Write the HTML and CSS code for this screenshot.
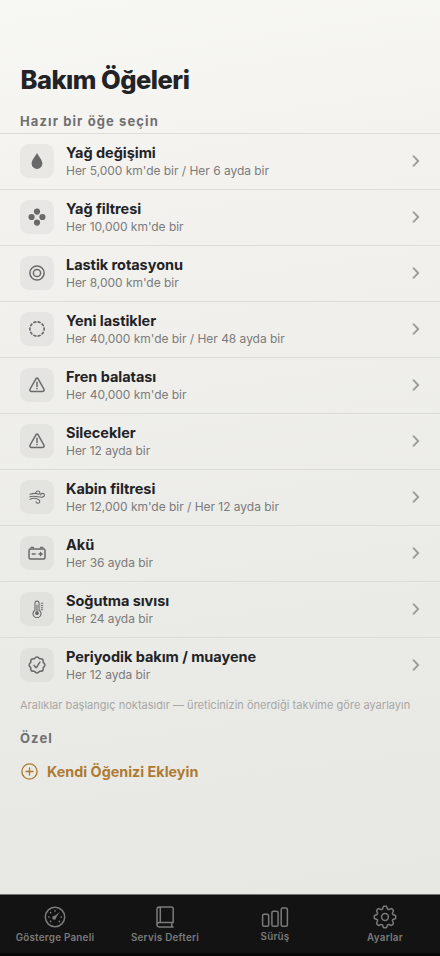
FILE: index.html
```html
<!DOCTYPE html>
<html lang="tr">
<head>
<meta charset="utf-8">
<meta name="viewport" content="width=device-width, initial-scale=1">
<title>Bakım Öğeleri</title>
<link rel="stylesheet" href="styles.css">
</head>
<body>
<svg class="defs" aria-hidden="true">
  <symbol id="chevron" viewBox="0 0 8 12"><path d="M1.5 1.2 6.2 6 1.5 10.8"/></symbol>
  <symbol id="warning" viewBox="-9 -9 18 18"><path d="M-1.1-6.2Q0-7.6 1.1-6.2L6.9 4Q7.7 6.2 5.6 6.4H-5.6Q-7.7 6.2-6.9 4Z"/><path d="M0-2.8V1.4M0 3.5V3.7"/></symbol>
</svg>
<main class="screen">
  <h1 class="title">Bakım Öğeleri</h1>
  <h2 class="section">Hazır bir öğe seçin</h2>
  <ul class="list">
    <li class="row"><span class="tile"><svg viewBox="-9 -9 18 18"><path class="solid" d="M0-8C1.1-5.3 5.4-1.2 5.4 2.6A5.4 5.3 0 0 1-5.4 2.6C-5.4-1.2-1.1-5.3 0-8Z"/></svg></span><div class="copy"><b class="name">Yağ değişimi</b><span class="detail">Her 5,000 km'de bir / Her 6 ayda bir</span></div><svg class="chevron"><use href="#chevron"/></svg></li>
    <li class="row"><span class="tile"><svg viewBox="-9 -9 18 18"><g class="solid"><circle cy="-5.4" r="3.1"/><circle cy="5.6" r="3.1"/><circle cx="-5.4" r="3.1"/><circle cx="5.4" r="3.1"/></g></svg></span><div class="copy"><b class="name">Yağ filtresi</b><span class="detail">Her 10,000 km'de bir</span></div><svg class="chevron"><use href="#chevron"/></svg></li>
    <li class="row"><span class="tile"><svg viewBox="-9 -9 18 18"><circle r="7.1"/><circle r="3.6"/></svg></span><div class="copy"><b class="name">Lastik rotasyonu</b><span class="detail">Her 8,000 km'de bir</span></div><svg class="chevron"><use href="#chevron"/></svg></li>
    <li class="row"><span class="tile"><svg viewBox="-9 -9 18 18"><circle class="dashed" r="7.1" pathLength="120"/></svg></span><div class="copy"><b class="name">Yeni lastikler</b><span class="detail">Her 40,000 km'de bir / Her 48 ayda bir</span></div><svg class="chevron"><use href="#chevron"/></svg></li>
    <li class="row"><span class="tile"><svg><use href="#warning"/></svg></span><div class="copy"><b class="name">Fren balatası</b><span class="detail">Her 40,000 km'de bir</span></div><svg class="chevron"><use href="#chevron"/></svg></li>
    <li class="row"><span class="tile"><svg><use href="#warning"/></svg></span><div class="copy"><b class="name">Silecekler</b><span class="detail">Her 12 ayda bir</span></div><svg class="chevron"><use href="#chevron"/></svg></li>
    <li class="row"><span class="tile"><svg class="fine" viewBox="-9 -9 18 18"><path d="M-7-2.7Q-2-4.4 1-2.9C4-2.2 3.1-6 .9-6Q-.8-6-1-4.5M-7.2-.2C-2-2 2 .9 5.4.1C8.4-.6 7.7-3.7 5.5-3.6Q3.8-3.6 3.7-2M-7 2.2C-3.5.6-.2 1.5 1.4 2.6C3.8 4 2.7 6.3.9 6.2Q-.8 6.2-1.1 4.7"/></svg></span><div class="copy"><b class="name">Kabin filtresi</b><span class="detail">Her 12,000 km'de bir / Her 12 ayda bir</span></div><svg class="chevron"><use href="#chevron"/></svg></li>
    <li class="row"><span class="tile"><svg viewBox="-9 -9 18 18"><rect x="-8" y="-4.1" width="16" height="10.1" rx="1.5"/><path d="M-5.8-5.5H-3.6M3.6-5.5H5.8M-4.7 1H-1.9M2 1H5.2M3.6-.6V2.6"/></svg></span><div class="copy"><b class="name">Akü</b><span class="detail">Her 36 ayda bir</span></div><svg class="chevron"><use href="#chevron"/></svg></li>
    <li class="row"><span class="tile"><svg class="fine" viewBox="-9 -9 18 18"><path d="M-2-6Q-1.9-7.9 0-7.9T2-6V1.2A4 4 0 1 1-2 1.2Z"/><path d="M0-4V3M4.2-5.7H5.7M4.2-3.5H5.7M4.2-1.3H5.7M4.2.7H5.7"/><circle class="solid" cy="4.2" r="1.9"/></svg></span><div class="copy"><b class="name">Soğutma sıvısı</b><span class="detail">Her 24 ayda bir</span></div><svg class="chevron"><use href="#chevron"/></svg></li>
    <li class="row"><span class="tile"><svg viewBox="-9 -9 18 18"><path d="M-2.6-6.2Q0-9.6 2.6-6.2Q6.8-6.8 6.2-2.6Q9.6 0 6.2 2.6Q6.8 6.8 2.6 6.2Q0 9.6-2.6 6.2Q-6.8 6.8-6.2 2.6Q-9.6 0-6.2-2.6Q-6.8-6.8-2.6-6.2ZM-2.9.4-.8 2.8 2.9-2.8"/></svg></span><div class="copy"><b class="name">Periyodik bakım / muayene</b><span class="detail">Her 12 ayda bir</span></div><svg class="chevron"><use href="#chevron"/></svg></li>
  </ul>
  <p class="note">Aralıklar başlangıç noktasıdır — üreticinizin önerdiği takvime göre ayarlayın</p>
  <h2 class="section custom">Özel</h2>
  <div class="add"><svg viewBox="-9 -9 18 18"><circle r="7.2"/><path d="M-3.3 0H3.3M0-3.3V3.3"/></svg><span>Kendi Öğenizi Ekleyin</span></div>
</main>
<nav class="tabs">
  <div class="tab"><svg viewBox="-12 -12 24 24"><circle r="9.7"/><circle class="solid" cx="-.8" cy=".8" r="2"/><path class="solid" d="M-2.1-.1 5-5-.1 2.1Z"/><path class="dots" d="M0-6.2V-6.2M-4.4-4.4V-4.4M-6.2 0V0M6.2 0V0M-4.4 4.4V4.4M4.4 4.4V4.4"/></svg><span>Gösterge Paneli</span></div>
  <div class="tab"><svg viewBox="-12 -12 24 24"><path d="M8.1 5.4H-5.8Q-8 5.6-8 7.8V-7.4Q-8-10-5.4-10H6.2Q8.2-10 8.2-8V5.4M-4.7-10V5.4M-8 7.8Q-7.8 10.1-5.6 10.1H8.1M6.8 5.5V10"/></svg><span>Servis Defteri</span></div>
  <div class="tab drive"><svg class="wide" viewBox="-14 -12 28 24"><rect x="-12.4" y="-2.7" width="6.1" height="12" rx="1.6"/><rect x="-3.1" y="-5.8" width="6.2" height="15.1" rx="1.6"/><rect x="6.2" y="-8.9" width="6.2" height="18.2" rx="1.6"/></svg><span>Sürüş</span></div>
  <div class="tab"><svg viewBox="-12 -12 24 24"><path d="M-2.5-7.9-1.8-10Q-1.6-10.7-1-10.7H1Q1.6-10.7 1.8-10L2.5-7.9Q3.1-7.4 3.8-7.4L5.8-8.3Q6.4-8.6 6.9-8.2L8.2-6.9Q8.6-6.4 8.3-5.8L7.4-3.8Q7.4-3.1 7.9-2.5L10-1.8Q10.7-1.6 10.7-1V1Q10.7 1.6 10 1.8L7.9 2.5Q7.4 3.1 7.4 3.8L8.3 5.8Q8.6 6.4 8.2 6.9L6.9 8.2Q6.4 8.6 5.8 8.3L3.8 7.4Q3.1 7.4 2.5 7.9L1.8 10Q1.6 10.7 1 10.7H-1Q-1.6 10.7-1.8 10L-2.5 7.9Q-3.1 7.4-3.8 7.4L-5.8 8.3Q-6.4 8.6-6.9 8.2L-8.2 6.9Q-8.6 6.4-8.3 5.8L-7.4 3.8Q-7.4 3.1-7.9 2.5L-10 1.8Q-10.7 1.6-10.7 1V-1Q-10.7-1.6-10-1.8L-7.9-2.5Q-7.4-3.1-7.4-3.8L-8.3-5.8Q-8.6-6.4-8.2-6.9L-6.9-8.2Q-6.4-8.6-5.8-8.3L-3.8-7.4Q-3.1-7.4-2.5-7.9Z"/><circle r="3.4"/></svg><span>Ayarlar</span></div>
</nav>
</body>
</html>
```
FILE: styles.css
```css
* { box-sizing: border-box; }
body {
  margin: 0;
  height: 956px;
  display: flex;
  flex-direction: column;
  overflow: hidden;
  font-family: Inter, sans-serif;
  color: #222326;
  background: linear-gradient(172deg, #f7f7f4 0%, #f3f2ef 20%, #ebebe7 60%, #e7e8e3 94%);
}
.defs { display: none; }
svg { fill: none; stroke: currentColor; stroke-width: 1.5; stroke-linecap: round; stroke-linejoin: round; }
.solid { fill: currentColor; stroke: none; }
.dashed { stroke-width: 1.6; stroke-linecap: butt; stroke-dasharray: 9 3; stroke-dashoffset: 4.5; }
.screen { flex: 1; padding-top: 62px; }
.title { margin: 0 20.5px; font-size: 25.5px; line-height: 36px; font-weight: 800; letter-spacing: -.5px; }
.section { margin: 14px 20px 3px; font-size: 13px; line-height: 18px; font-weight: 700; letter-spacing: 1.1px; color: #707071; }
.list { margin: 0; padding: 0; list-style: none; }
.row { height: 56px; padding: 0 20px 1px; display: flex; align-items: center; gap: 12px; border-top: 1px solid #dcdcd9; }
.tile { width: 34px; height: 34px; border-radius: 8.5px; background: rgba(60, 60, 65, .06); display: grid; place-items: center; color: #69696a; }
.tile svg { width: 18px; height: 18px; }
.tile .fine { stroke-width: 1.1; }
.copy { flex: 1; display: flex; flex-direction: column; }
.name { font-size: 14.5px; line-height: 18px; padding-bottom: 1px; font-weight: 700; letter-spacing: -.04px; }
.detail { font-size: 12px; line-height: 16px; color: #7b7b7b; letter-spacing: -.03px; }
.chevron { width: 8px; height: 12px; color: #9b9b9a; stroke-width: 1.8; }
.note { margin: 4px 20px 0; font-size: 11px; line-height: 16px; color: #a7a7a5; white-space: nowrap; letter-spacing: .02px; }
.custom { margin-top: 16px; }
.add { margin: 15px 20px 0; display: flex; align-items: center; gap: 8px; font-size: 14.3px; line-height: 18px; font-weight: 700; letter-spacing: .03px; color: #ae7a32; }
.add svg { width: 19px; height: 19px; stroke-width: 1.3; }
.tabs { height: 62px; padding-top: 9.5px; display: grid; grid-template-columns: repeat(4, 1fr); background: #131313; border-top: 1px solid #737371; border-bottom: 3px solid #070707; color: #7b7b7b; }
.tab { display: flex; flex-direction: column; align-items: center; font-size: 9.8px; line-height: 14px; font-weight: 600; letter-spacing: .27px; gap: 2px; }
.tab svg { width: 24px; height: 24px; }
.tab .wide { width: 28px; }
.drive { gap: 1px; }
.dots { stroke-width: 1.7; }
```
